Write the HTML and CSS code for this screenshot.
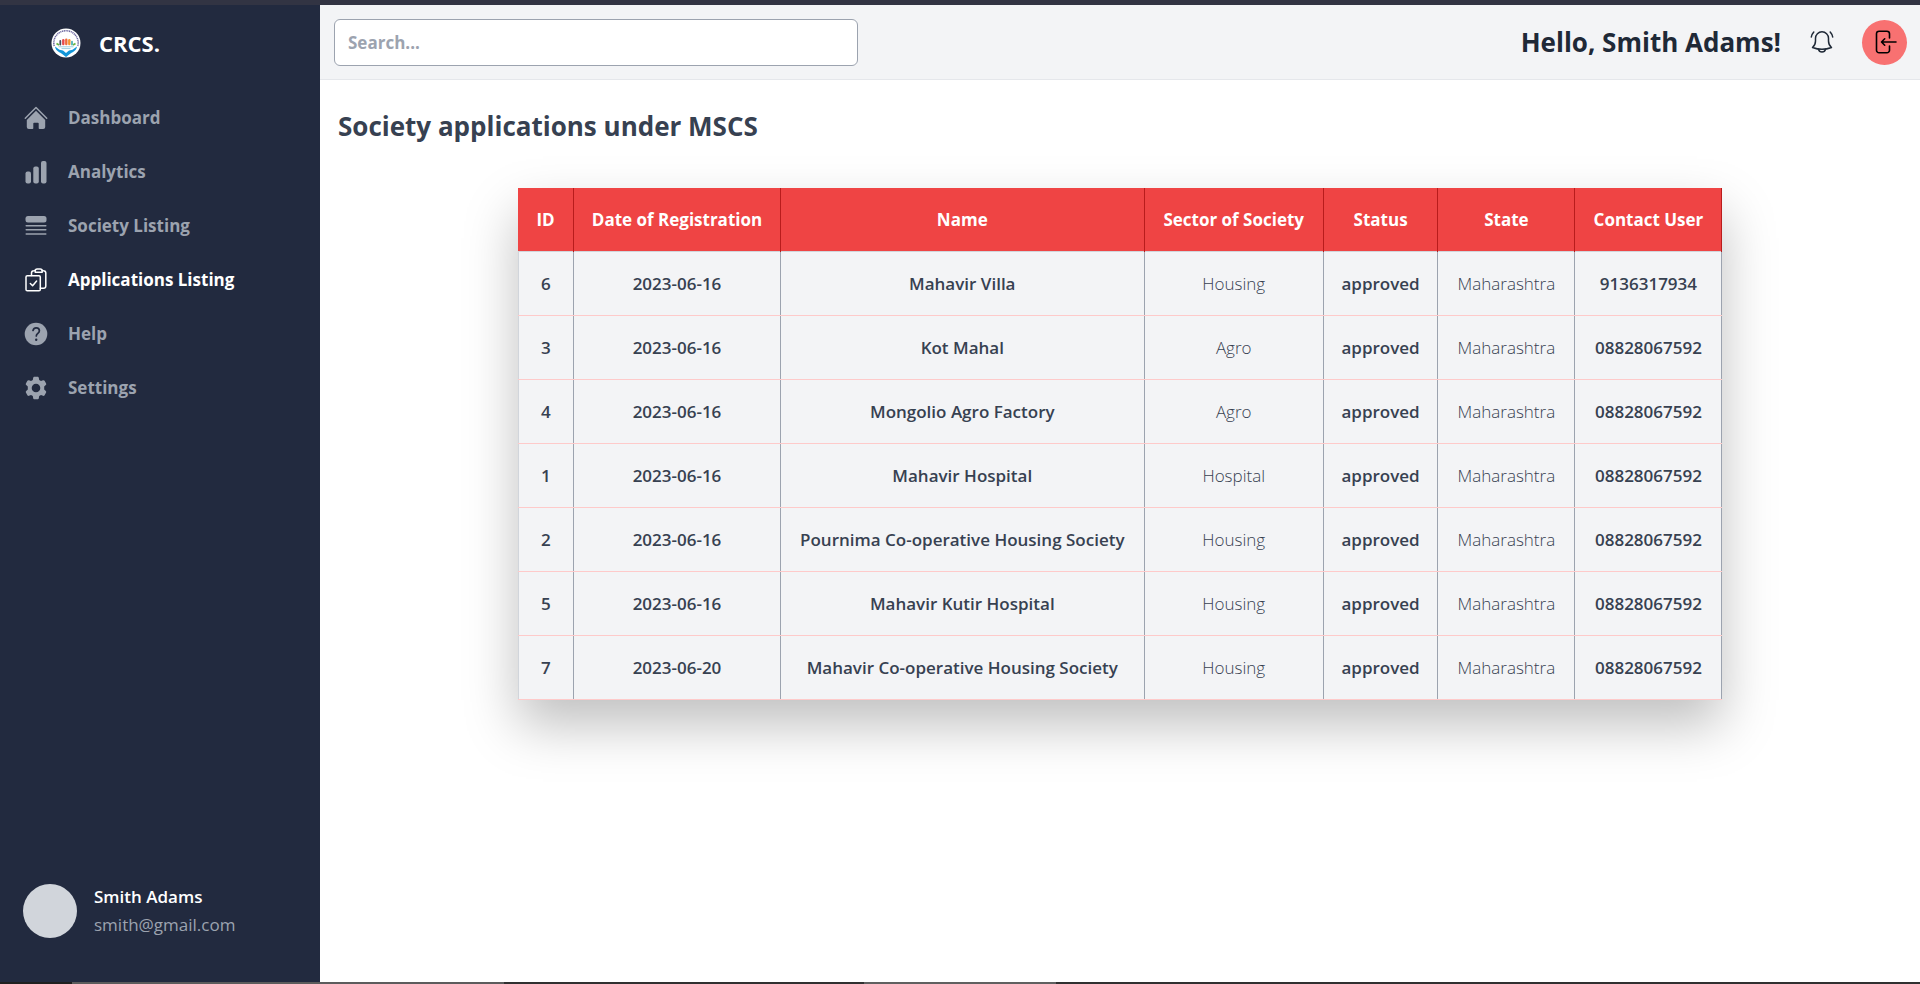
FILE: index.html
```html
<!DOCTYPE html>
<html lang="en">
<head>
<meta charset="utf-8">
<title>CRCS</title>
<link rel="stylesheet" href="styles.css">
</head>
<body>
<div class="top-strip"></div>
<div class="app">
  <aside class="sidebar">
    <a class="brand" href="#">
      <svg class="brand-logo" viewBox="0 0 30 30" aria-hidden="true">
        <circle cx="15" cy="15" r="14.5" fill="#fff"/>
        <path d="M3.200 18A12.200 12.200 0 1 1 26.800 18" fill="none" stroke="#6d68a0" stroke-width="1.500" stroke-dasharray="1.200 .6"/>
        <path d="M5.500 15.500l2.500 1.500M24.500 15.500l-2.500 1.500" stroke="#6bb544" stroke-width="1.800"/>
        <path d="M9.300 16.500v-3.500" stroke="#4b4d63" stroke-width="1.800" stroke-linecap="round"/>
        <path d="M12.300 16V12.200" stroke="#e5484d" stroke-width="2.400" stroke-linecap="round"/>
        <path d="M15.300 16V11.700" stroke="#ee6b3b" stroke-width="2.400" stroke-linecap="round"/>
        <path d="M18.300 16V12.200" stroke="#f59331" stroke-width="2.400" stroke-linecap="round"/>
        <path d="M21 16.500v-2.800" stroke="#4bb1b7" stroke-width="1.800" stroke-linecap="round"/>
        <path d="M7.500 18.800h15M10.500 20.600h9" stroke="#9ccfe0" stroke-width="1"/>
        <path d="M4 18.500c.5 4 3.500 5 6.500 7l4.500 3.500 4.500-3.500c3-2 6-3 6.500-7l-4.500 3.200-3.500.8-3 2.500-3-2.500-3.500-.8z" fill="#1295d8"/>
      </svg>
      <span>CRCS.</span>
    </a>
    <nav class="nav">
      <a class="nav-link" href="#">
        <svg class="icon" viewBox="0 0 24 24" aria-hidden="true"><path d="M1.300 12.200L12 1.500l10.700 10.700" fill="none" stroke="currentColor" stroke-width="1.500" stroke-linecap="round" stroke-linejoin="round"/><path fill="currentColor" d="M12 4.700l9.200 9.200V21a2 2 0 0 1-2 2H15.500a.8.8 0 0 1-.8-.8V17.500a.8.8 0 0 0-.8-.8h-3.800a.8.8 0 0 0-.8.800v4.700a.8.8 0 0 1-.8.800H4.800a2 2 0 0 1-2-2v-7.100z"/></svg>
        Dashboard
      </a>
      <a class="nav-link" href="#">
        <svg class="icon" viewBox="0 0 24 24" aria-hidden="true"><g fill="currentColor"><rect x="1.500" y="11.500" width="5.500" height="12" rx="2"/><rect x="9.300" y="6.500" width="5.500" height="17" rx="2"/><rect x="17" y="1" width="5.500" height="22.500" rx="2"/></g></svg>
        Analytics
      </a>
      <a class="nav-link" href="#">
        <svg class="icon" viewBox="0 0 24 24" aria-hidden="true"><rect x="1.500" y="2" width="21" height="6.500" rx="2.500" fill="currentColor"/><path d="M2.200 11.700h19.600M2.200 15.800h19.600M2.200 20h19.600" stroke="currentColor" stroke-width="1.500" stroke-linecap="round"/></svg>
        Society Listing
      </a>
      <a class="nav-link active" href="#" aria-current="page">
        <svg class="icon" viewBox="0 0 24 24" fill="none" stroke="currentColor" stroke-width="1.500" stroke-linecap="round" stroke-linejoin="round" aria-hidden="true"><rect x="2" y="7.700" width="14.300" height="15" rx="1.300"/><path d="M6.300 15.500l2.300 2.300 4-4.700"/><path d="M16.300 20.200h3.200a2.300 2.300 0 0 0 2.300-2.300V4.900a2.300 2.300 0 0 0-2.200-2.200l-1.500-.2M7.500 7.500V4.900a2.300 2.300 0 0 1 2.200-2.200l1.500-.2"/><path d="M11.200 4.200V2.900a2 2 0 0 1 2-2h3a2 2 0 0 1 2 2v1.300z"/></svg>
        Applications Listing
      </a>
      <a class="nav-link" href="#">
        <svg class="icon" viewBox="0 0 24 24" aria-hidden="true"><circle cx="12" cy="12" r="11.300" fill="currentColor"/><path d="M9 8.400c.6-1.900 1.900-2.700 3.300-2.600 1.800.1 3.100 1.200 3.100 2.900 0 2.700-3.100 2.500-3.100 5.200" fill="none" stroke="#222a3f" stroke-width="1.700" stroke-linecap="round"/><circle cx="12.200" cy="17.700" r="1.200" fill="#222a3f"/></svg>
        Help
      </a>
      <a class="nav-link" href="#">
        <svg class="icon" viewBox="0 0 24 24" aria-hidden="true"><path fill="currentColor" fill-rule="evenodd" d="M10.500.7h3c.7 0 1.200.4 1.300 1.100l.4 2.100 1.800 1 2-.7c.6-.2 1.300 0 1.600.6l1.500 2.600c.3.600.2 1.300-.3 1.700l-1.600 1.500v2.800l1.600 1.500c.5.4.6 1.100.3 1.700l-1.500 2.600c-.3.600-1 .8-1.600.6l-2-.7-1.800 1-.4 2.100c-.1.700-.6 1.100-1.300 1.100h-3c-.7 0-1.200-.4-1.300-1.100l-.4-2.100-1.800-1-2 .7c-.6.200-1.300 0-1.600-.6l-1.500-2.600c-.3-.6-.2-1.300.3-1.700l1.600-1.500v-2.800L2.200 9.100c-.5-.4-.6-1.100-.3-1.700l1.500-2.600c.3-.6 1-.8 1.600-.6l2 .7 1.800-1 .4-2.100c.1-.7.600-1.100 1.300-1.100zM12 7.700a4.300 4.300 0 1 0 0 8.600 4.300 4.300 0 0 0 0-8.600z"/></svg>
        Settings
      </a>
    </nav>
    <div class="profile">
      <div class="avatar"></div>
      <div>
        <div class="profile-name">Smith Adams</div>
        <div class="profile-mail">smith@gmail.com</div>
      </div>
    </div>
  </aside>
  <div class="content">
    <header class="header">
      <input class="search" type="text" placeholder="Search..." aria-label="Search">
      <div class="header-right">
        <div class="greeting">Hello, Smith Adams!</div>
        <button class="bell" type="button" aria-label="Notifications">
          <svg class="icon" viewBox="0 0 24 24" fill="none" stroke="currentColor" stroke-width="1.500" stroke-linecap="round" stroke-linejoin="round" aria-hidden="true"><path d="M2.500 17.500c2-1.700 3-3.600 3-6.500V8.300a6.500 6.500 0 0 1 13 0V11c0 2.900 1 4.800 3 6.500-5.800 2.200-13.200 2.200-19 0z"/><path d="M8.500 19.200a3.600 3.600 0 0 0 7 0M3.800 2C2.500 3.400 1.600 5.100 1.300 7M20.200 2c1.300 1.400 2.200 3.100 2.500 5"/></svg>
        </button>
        <button class="logout" type="button" aria-label="Log out">
          <svg class="icon" viewBox="0 0 24 24" fill="none" stroke="currentColor" stroke-width="1.600" stroke-linecap="round" stroke-linejoin="round" aria-hidden="true"><path d="M16.500 8V3.800a2.600 2.600 0 0 0-2.600-2.600H6.100a2.600 2.600 0 0 0-2.600 2.600v16.400a2.600 2.600 0 0 0 2.600 2.600h7.800a2.600 2.600 0 0 0 2.600-2.600V16M23 12H8.700M11.700 8.800L8.500 12l3.200 3.200"/></svg>
        </button>
      </div>
    </header>
    <main class="main">
      <h1 class="title">Society applications under MSCS</h1>
      <table class="table">
        <colgroup><col class="c-id"><col class="c-date"><col class="c-name"><col class="c-sector"><col class="c-status"><col class="c-state"><col class="c-contact"></colgroup>
        <thead>
          <tr><th>ID</th><th>Date of Registration</th><th>Name</th><th>Sector of Society</th><th>Status</th><th>State</th><th>Contact User</th></tr>
        </thead>
        <tbody>
          <tr><td>6</td><td>2023-06-16</td><td>Mahavir Villa</td><td class="light">Housing</td><td>approved</td><td class="light">Maharashtra</td><td>9136317934</td></tr>
          <tr><td>3</td><td>2023-06-16</td><td>Kot Mahal</td><td class="light">Agro</td><td>approved</td><td class="light">Maharashtra</td><td>08828067592</td></tr>
          <tr><td>4</td><td>2023-06-16</td><td>Mongolio Agro Factory</td><td class="light">Agro</td><td>approved</td><td class="light">Maharashtra</td><td>08828067592</td></tr>
          <tr><td>1</td><td>2023-06-16</td><td>Mahavir Hospital</td><td class="light">Hospital</td><td>approved</td><td class="light">Maharashtra</td><td>08828067592</td></tr>
          <tr><td>2</td><td>2023-06-16</td><td>Pournima Co-operative Housing Society</td><td class="light">Housing</td><td>approved</td><td class="light">Maharashtra</td><td>08828067592</td></tr>
          <tr><td>5</td><td>2023-06-16</td><td>Mahavir Kutir Hospital</td><td class="light">Housing</td><td>approved</td><td class="light">Maharashtra</td><td>08828067592</td></tr>
          <tr><td>7</td><td>2023-06-20</td><td>Mahavir Co-operative Housing Society</td><td class="light">Housing</td><td>approved</td><td class="light">Maharashtra</td><td>08828067592</td></tr>
        </tbody>
      </table>
    </main>
  </div>
</div>
<div class="bottom-strip"></div>
</body>
</html>
```
FILE: styles.css
```css
* { box-sizing: border-box; }
body {
  margin: 0;
  min-height: 100vh;
  display: flex;
  flex-direction: column;
  font-family: "Open Sans", "Noto Sans", sans-serif;
  font-size: 17px;
  line-height: 28px;
  color: #374151;
  background: #fff;
}
a { color: inherit; text-decoration: none; }
button { border: 0; padding: 0; cursor: pointer; font: inherit; }
.icon { width: 24px; height: 24px; display: block; flex: none; }

.top-strip { height: 5px; background: #323443; }
.bottom-strip {
  height: 2px;
  background: linear-gradient(to right, #202020 3.75%, #5c5c5c 3.75% 26.25%, #303030 26.25% 45%, #606060 45% 55%, #303030 55%);
}
.app { flex: 1; display: flex; }

.sidebar {
  width: 320px;
  flex: none;
  display: flex;
  flex-direction: column;
  background: #222a3f;
  color: #9ca3af;
}
.brand {
  display: flex;
  align-items: center;
  gap: 18px;
  height: 76px;
  padding-left: 51px;
  color: #fff;
  font-size: 22px;
  font-weight: 700;
}
.brand-logo { width: 30px; height: 30px; }
.nav { display: flex; flex-direction: column; padding-top: 10px; }
.nav-link {
  display: flex;
  align-items: center;
  gap: 20px;
  height: 54px;
  padding-left: 24px;
  font-weight: 700;
}
.nav-link.active { color: #fff; }
.profile {
  display: flex;
  align-items: center;
  gap: 17px;
  margin-top: auto;
  padding: 0 23px 43px;
}
.avatar { width: 54px; height: 54px; border-radius: 50%; background: #d1d5db; }
.profile-name { color: #fff; font-weight: 600; }

.content { flex: 1; min-width: 0; }
.header {
  display: flex;
  align-items: center;
  justify-content: space-between;
  height: 75px;
  padding: 0 13px 0 14px;
  background: #f3f4f6;
  border-bottom: 1px solid #e5e7eb;
}
.search {
  width: 33.3%;
  height: 47px;
  padding: 0 13px;
  border: 1px solid #9ca3af;
  border-radius: 6px;
  background: #fff;
  font: inherit;
  font-weight: 700;
  color: #374151;
}
.search::placeholder { color: #9ca3af; opacity: 1; }
.header-right { display: flex; align-items: center; }
.greeting { font-size: 26px; font-weight: 700; color: #1f2937; margin-right: 29px; }
.bell { background: none; color: #1f2937; margin-right: 28px; }
.logout {
  display: flex;
  align-items: center;
  justify-content: center;
  width: 45px;
  height: 45px;
  border-radius: 50%;
  background: #f87171;
  color: #000;
}

.title {
  margin: 0;
  padding: 30px 18px 46px;
  font-size: 26px;
  line-height: 32px;
  font-weight: 700;
}
.table {
  width: 75.3%;
  margin: 0 auto;
  border-collapse: collapse;
  background: #f3f4f6;
  text-align: center;
  white-space: nowrap;
  box-shadow: 0 25px 50px rgba(0, 0, 0, .25);
}
.c-id { width: 4.6%; }
.c-date { width: 17.2%; }
.c-name { width: 30.2%; }
.c-sector { width: 14.9%; }
.c-status { width: 9.5%; }
.c-state { width: 11.4%; }
.c-contact { width: 12.2%; }
.table th, .table td { padding: 1px 10px 0; }
.table th {
  height: 63px;
  background: #ef4444;
  color: #fff;
  font-weight: 700;
  border-right: 1px solid #b91c1c;
}
.table td {
  height: 64px;
  font-weight: 600;
  border-right: 1px solid #9ca3af;
  border-bottom: 1px solid #fecaca;
}
.table tbody td:first-child { border-left: 1px solid #d1d5db; }
.table tbody tr:first-child td { border-top: 1px solid #d1d5db; }
.table td.light { font-weight: 300; }
```
